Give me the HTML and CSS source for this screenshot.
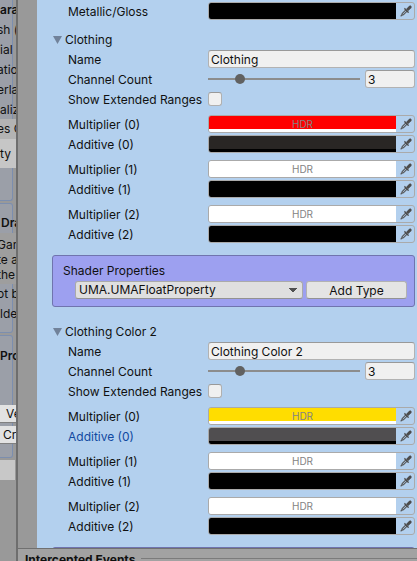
FILE: index.html
```html
<!DOCTYPE html>
<html lang="en">
<head>
<meta charset="utf-8">
<title>Shared Colors</title>
<link rel="stylesheet" href="styles.css">
</head>
<body>
<svg class="defs" aria-hidden="true">
  <symbol id="dropper" viewBox="0 0 12 12">
    <path d="M6.4 4.4 2.2 8.6 1.6 10.4 3.4 9.8 7.6 5.6" fill="none" stroke="#555" stroke-width="1.1"/>
    <path d="M1 10 2 11 1 11.6 .4 11z" fill="#555"/>
    <path d="M4.8 2.8 9.2 7.2 8 8 4 4z" fill="#4c4c4c"/>
    <path d="M6.2 4 8.6 1.4C9.4.4 10.6.4 11.2 1s.6 1.8-.4 2.6L8.2 6z" fill="#4c4c4c"/>
  </symbol>
</svg>
<div class="window">
  <aside class="behind">
    <div class="card first">
      <p class="bold">ara</p><p class="far">sh (</p><p>ial</p><p class="far">atio</p><p class="far">erla</p><p>aliz</p>
      <p class="tab far">es C</p><p class="cell">ty</p>
    </div>
    <div class="card second">
      <p class="bold indent">Dra</p>
      <div class="help far">Gam<br>te a<br>the</div>
      <p class="far">ot b</p><p>lde</p>
    </div>
    <div class="card third">
      <p class="bold">Pro</p>
      <button class="cut ve">Ve</button>
      <button class="cut cr">Cr</button>
    </div>
    <div class="slot"></div>
  </aside>
  <main class="inspector">
    <div class="list">
      <div class="row"><span class="label">Metallic/Gloss</span><button class="color black" aria-label="Metallic/Gloss"><span class="swatch"></span><svg><use href="#dropper"/></svg></button></div>

      <section class="group">
        <h2>Clothing</h2>
        <div class="row"><label class="label" for="name1">Name</label><input class="text" id="name1" value="Clothing"></div>
        <div class="row"><label class="label" for="count1">Channel Count</label><input class="slider" id="count1" type="range" min="0" max="16" value="3"><input class="text number" aria-label="Channel Count value" value="3"></div>
        <div class="row"><label class="label" for="ext1">Show Extended Ranges</label><input class="check" id="ext1" type="checkbox"></div>
        <div class="row pair"><span class="label">Multiplier (0)</span><button class="color red" aria-label="Multiplier (0)"><span class="swatch">HDR</span><svg><use href="#dropper"/></svg></button></div>
        <div class="row"><span class="label">Additive (0)</span><button class="color dark" aria-label="Additive (0)"><span class="swatch"></span><svg><use href="#dropper"/></svg></button></div>
        <div class="row pair"><span class="label">Multiplier (1)</span><button class="color white" aria-label="Multiplier (1)"><span class="swatch">HDR</span><svg><use href="#dropper"/></svg></button></div>
        <div class="row"><span class="label">Additive (1)</span><button class="color black" aria-label="Additive (1)"><span class="swatch"></span><svg><use href="#dropper"/></svg></button></div>
        <div class="row pair"><span class="label">Multiplier (2)</span><button class="color white" aria-label="Multiplier (2)"><span class="swatch">HDR</span><svg><use href="#dropper"/></svg></button></div>
        <div class="row"><span class="label">Additive (2)</span><button class="color black" aria-label="Additive (2)"><span class="swatch"></span><svg><use href="#dropper"/></svg></button></div>
      </section>

      <section class="shader">
        <label for="prop">Shader Properties</label>
        <div class="tools">
          <select id="prop"><option>UMA.UMAFloatProperty</option></select>
          <button class="add">Add Type</button>
        </div>
      </section>

      <section class="group">
        <h2>Clothing Color 2</h2>
        <div class="row"><label class="label" for="name2">Name</label><input class="text" id="name2" value="Clothing Color 2"></div>
        <div class="row"><label class="label" for="count2">Channel Count</label><input class="slider" id="count2" type="range" min="0" max="16" value="3"><input class="text number" aria-label="Channel Count value" value="3"></div>
        <div class="row"><label class="label" for="ext2">Show Extended Ranges</label><input class="check" id="ext2" type="checkbox"></div>
        <div class="row pair"><span class="label">Multiplier (0)</span><button class="color yellow" aria-label="Multiplier (0)"><span class="swatch">HDR</span><svg><use href="#dropper"/></svg></button></div>
        <div class="row"><span class="label active">Additive (0)</span><button class="color gray" aria-label="Additive (0)"><span class="swatch"></span><svg><use href="#dropper"/></svg></button></div>
        <div class="row pair"><span class="label">Multiplier (1)</span><button class="color white" aria-label="Multiplier (1)"><span class="swatch">HDR</span><svg><use href="#dropper"/></svg></button></div>
        <div class="row"><span class="label">Additive (1)</span><button class="color black" aria-label="Additive (1)"><span class="swatch"></span><svg><use href="#dropper"/></svg></button></div>
        <div class="row pair"><span class="label">Multiplier (2)</span><button class="color white" aria-label="Multiplier (2)"><span class="swatch">HDR</span><svg><use href="#dropper"/></svg></button></div>
        <div class="row"><span class="label">Additive (2)</span><button class="color black" aria-label="Additive (2)"><span class="swatch"></span><svg><use href="#dropper"/></svg></button></div>
      </section>
      <div class="next"></div>
    </div>
    <footer><strong>Intercepted Events</strong><span class="rule"></span></footer>
  </main>
</div>
</body>
</html>
```
FILE: styles.css
```css
* { box-sizing: border-box; }
body {
  margin: 0;
  height: 100vh;
  overflow: hidden;
  background: #999;
  color: #101010;
  font: 12px/18px Inter, "Liberation Sans", sans-serif;
}
.defs { display: none; }
p, h2 { margin: 0; font-size: 12px; font-weight: 400; }
button, input, select { margin: 0; font: inherit; color: inherit; }

.window {
  display: grid;
  grid-template-columns: 16px minmax(0, 1fr);
  grid-template-rows: minmax(0, 1fr);
  height: 100vh;
}

/* Window underneath, of which only the edge shows */
.behind { overflow: hidden; white-space: nowrap; background: #999; }
.behind p { line-height: 20px; }
.behind .bold { font-weight: 600; }
.behind .far { margin-left: -3px; }
.card {
  width: 13px;
  margin-bottom: 2px;
  border: 1px solid #7c8eae;
  border-left: 0;
  border-radius: 0 3px 3px 0;
  background: #9b9fa8;
}
.first { height: 201px; border-top: 0; border-radius: 0 0 3px 0; }
.first .tab { width: 19px; margin-top: -1px; background: #b3b3b3; }
.behind .cell { width: 16px; line-height: 29px; background: #c6c6c6; }
.second { height: 130px; padding-top: 9px; }
.behind .indent { text-indent: 1px; }
.help { width: 19px; padding: 4px 0 2px; line-height: 15px; background: #9e9e9e; }
.third { height: 123px; padding-top: 10px; }
.cut {
  display: block;
  width: 17px;
  height: 18px;
  margin-bottom: 3px;
  padding: 0;
  border: 0;
  border-bottom: 1px solid #808080;
  background: #e2e2e2;
  line-height: 18px;
  text-align: left;
}
.ve { margin-top: 39px; padding-left: 6px; }
.cr { padding-left: 3px; }
.slot { width: 15px; height: 20px; background: #c8c8c8; }

.inspector {
  display: flex;
  flex-direction: column;
  min-width: 0;
  border-left: 2px solid #6e6e6e;
}
.list {
  flex: 1;
  min-height: 0;
  overflow: hidden;
  margin-left: 19px;
  padding: 2px 2px 0 15px;
  background: #b3d0ee;
}
.group { padding-top: 8px; }
h2 { display: flex; align-items: center; gap: 3px; height: 20px; }
h2::before {
  content: "";
  width: 9px;
  height: 8px;
  margin-left: 1px;
  background: #71829a;
  clip-path: polygon(0 0, 100% 0, 50% 100%);
}
.row { display: flex; align-items: center; height: 18px; margin-bottom: 2px; padding-left: 16px; }
.pair { margin-top: 7px; }
.row:last-child { margin-bottom: 0; }
.label { flex: 0 0 140px; padding-top: 2px; white-space: nowrap; }
.active { color: #1149a0; }

.text {
  flex: 1;
  min-width: 0;
  height: 18px;
  padding: 2px 2px 0;
  border: 1px solid #b2b2b2;
  border-top-color: #999;
  border-radius: 3px;
  background: #f0f0f0;
}
.number { flex: 0 0 50px; }
.slider {
  flex: 1;
  min-width: 0;
  height: 18px;
  margin-right: 5px;
  appearance: none;
  background: linear-gradient(#8c8c8c, #8c8c8c) center / 100% 2px no-repeat;
}
.slider::-webkit-slider-thumb {
  appearance: none;
  width: 10px;
  height: 10px;
  border-radius: 50%;
  background: #616161;
}
.check {
  appearance: none;
  width: 14px;
  height: 14px;
  border: 1px solid #b0b0b0;
  border-top-color: #999;
  border-radius: 3px;
  background: #f0f0f0;
}

.color {
  flex: 1;
  display: flex;
  min-width: 0;
  height: 18px;
  padding: 0;
  overflow: hidden;
  border: 1px solid #aaa;
  border-radius: 3px;
  background: transparent;
}
.color svg { width: 12px; height: 12px; margin: 2px 2px 2px 4px; }
.swatch {
  flex: 1;
  height: 16px;
  background: #fff;
  color: #838383;
  font-size: 10px;
  line-height: 17px;
  text-align: center;
}
.black .swatch { background: #000; }
.red .swatch { background: linear-gradient(#f00 13px, #fff 13px); }
.yellow .swatch { background: linear-gradient(#ffdd00 13px, #fff 13px); }
.dark .swatch { background: linear-gradient(#292624 13px, #000 13px); }
.gray .swatch { background: linear-gradient(#504e50 13px, #000 13px); }

.shader, .next {
  margin-top: 12px;
  border: 1px solid #7074ae;
  border-radius: 3px;
  background: #9da0f0;
}
.shader { height: 52px; margin-bottom: 7px; padding: 6px 7px 0 10px; }
.shader label { display: block; }
.next { height: 52px; }
.tools { display: flex; gap: 3px; margin-top: 1px; padding-left: 12px; }
.tools select {
  flex: 1;
  min-width: 0;
  height: 18px;
  padding: 0 3px;
  appearance: none;
  border: 1px solid #aaa;
  border-bottom-color: #929292;
  border-radius: 3px;
  background:
    conic-gradient(from -38deg at 50% 100%, #505050 76deg, transparent 0) right 5px center / 8px 5px no-repeat,
    #dfdfdf;
  line-height: 16px;
}
.tools select { background-image: linear-gradient(to bottom right, #505050 50%, transparent 50%), linear-gradient(to bottom left, #505050 50%, transparent 50%); background-position: right 5px center, right 9px center; background-size: 4px 5px; background-repeat: no-repeat; }
.add {
  flex: 0 0 101px;
  height: 18px;
  padding: 1px 0 0;
  border: 1px solid #b2b2b2;
  border-bottom-color: #939393;
  border-radius: 3px;
  background: #e4e4e4;
  line-height: 16px;
}

footer {
  display: flex;
  flex: none;
  height: 13px;
  overflow: hidden;
  padding-left: 7px;
  gap: 6px;
  border-top: 1px solid #707070;
  background: #a2a2a2;
}
footer strong { line-height: 22px; white-space: nowrap; }
.rule { flex: 1; height: 1px; margin-top: 9px; background: #7b7b7b; }
```
